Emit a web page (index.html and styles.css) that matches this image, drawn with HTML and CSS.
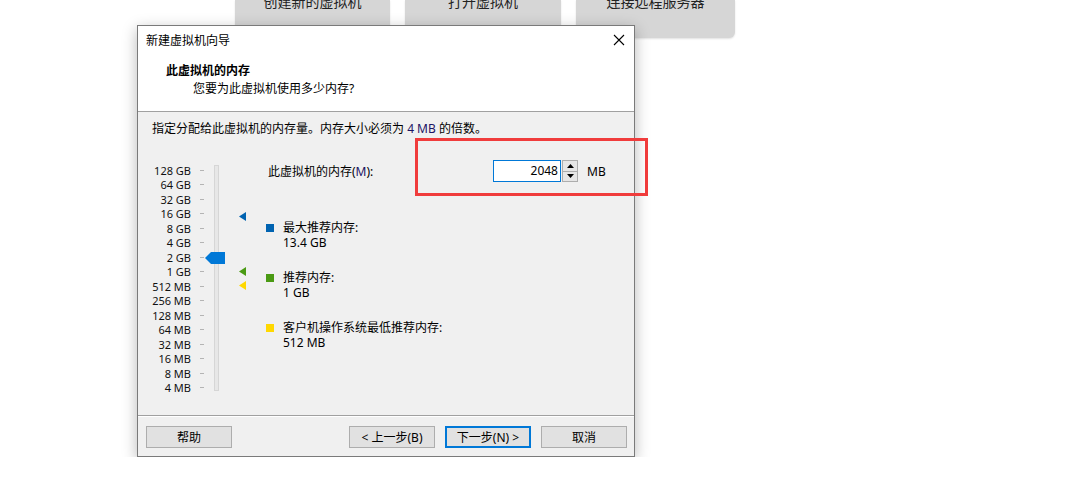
FILE: index.html
```html
<!DOCTYPE html>
<html lang="zh-CN">
<head>
<meta charset="UTF-8">
<title>新建虚拟机向导</title>
<link rel="stylesheet" href="styles.css">
</head>
<body>

<div class="toolbar">
    <div class="tool-btn">创建新的虚拟机</div>
    <div class="tool-btn">打开虚拟机</div>
    <div class="tool-btn">连接远程服务器</div>
</div>

<div class="dialog">
    <div class="titlebar">
        <span class="title">新建虚拟机向导</span>
        <svg class="close" width="12" height="12" viewBox="0 0 12 12">
            <path d="M1 1 L11 11 M11 1 L1 11" stroke="#000" stroke-width="1.1" fill="none"/>
        </svg>
    </div>
    <div class="header">
        <div class="heading">此虚拟机的内存</div>
        <div class="subheading">您要为此虚拟机使用多少内存?</div>
    </div>

    <div class="body">
        <div class="hint">指定分配给此虚拟机的内存量。内存大小必须为 <span class="accent">4 MB</span> 的倍数。</div>

        <div class="main">
            <div class="scale">
                <div class="labels">
                    <div class="mark"><span>128 GB</span><i></i></div>
                    <div class="mark"><span>64 GB</span><i></i></div>
                    <div class="mark"><span>32 GB</span><i></i></div>
                    <div class="mark"><span>16 GB</span><i></i></div>
                    <div class="mark"><span>8 GB</span><i></i></div>
                    <div class="mark"><span>4 GB</span><i></i></div>
                    <div class="mark"><span>2 GB</span><i></i></div>
                    <div class="mark"><span>1 GB</span><i></i></div>
                    <div class="mark"><span>512 MB</span><i></i></div>
                    <div class="mark"><span>256 MB</span><i></i></div>
                    <div class="mark"><span>128 MB</span><i></i></div>
                    <div class="mark"><span>64 MB</span><i></i></div>
                    <div class="mark"><span>32 MB</span><i></i></div>
                    <div class="mark"><span>16 MB</span><i></i></div>
                    <div class="mark"><span>8 MB</span><i></i></div>
                    <div class="mark"><span>4 MB</span><i></i></div>
                </div>
                <div class="track"></div>

                <svg class="thumb" width="20" height="12" viewBox="0 0 20 12">
                    <path d="M0 6 L6 0 H20 V12 H6 Z" fill="#0078d7"/>
                </svg>
                <svg class="pointer" style="top: 49px" width="7" height="9" viewBox="0 0 7 9">
                    <path d="M0 4.5 L7 0 V9 Z" fill="#0063b1"/>
                </svg>
                <svg class="pointer" style="top: 104px" width="7" height="9" viewBox="0 0 7 9">
                    <path d="M0 4.5 L7 0 V9 Z" fill="#4a9a13"/>
                </svg>
                <svg class="pointer" style="top: 118px" width="7" height="9" viewBox="0 0 7 9">
                    <path d="M0 4.5 L7 0 V9 Z" fill="#ffd800"/>
                </svg>
            </div>

            <div class="panel">
                <div class="memory-row">
                    <label class="memory-label">此虚拟机的内存(<span class="accent">M</span>):</label>
                    <div class="spin-input">2048</div>
                    <div class="spinner">
                        <div class="spin-btn">
                            <svg width="7" height="4" viewBox="0 0 7 4"><path d="M0 4 L3.5 0 L7 4 Z" fill="#000"/></svg>
                        </div>
                        <div class="spin-btn">
                            <svg width="7" height="4" viewBox="0 0 7 4"><path d="M0 0 L3.5 4 L7 0 Z" fill="#000"/></svg>
                        </div>
                    </div>
                    <span class="unit">MB</span>
                </div>

                <div class="legend">
                    <div class="legend-item">
                        <div class="legend-label"><span class="swatch swatch-blue"></span>最大推荐内存:</div>
                        <div class="legend-value">13.4 GB</div>
                    </div>
                    <div class="legend-item">
                        <div class="legend-label"><span class="swatch swatch-green"></span>推荐内存:</div>
                        <div class="legend-value">1 GB</div>
                    </div>
                    <div class="legend-item">
                        <div class="legend-label"><span class="swatch swatch-yellow"></span>客户机操作系统最低推荐内存:</div>
                        <div class="legend-value">512 MB</div>
                    </div>
                </div>
            </div>
        </div>
    </div>

    <div class="footer">
        <button class="btn">帮助</button>
        <div class="footer-right">
            <button class="btn">&lt; 上一步(B)</button>
            <button class="btn btn-default">下一步(N) &gt;</button>
            <button class="btn">取消</button>
        </div>
    </div>

    <div class="highlight"></div>
</div>

</body>
</html>
```

FILE: styles.css
```css
body {
    margin: 0;
    padding: 0;
    background: #fff;
    font-family: "Noto Sans", "Noto Sans CJK SC", sans-serif;
    font-size: 12px;
    color: #000;
    overflow: hidden;
}

/* background toolbar, mostly hidden behind the dialog */
.toolbar {
    display: flex;
    gap: 15px;
    margin-left: 235px;
    height: 38px;
}
.tool-btn {
    width: 156px;
    height: 38px;
    background: #d6d6d6;
    border-radius: 0 0 6px 6px;
    box-shadow: 0 1px 2px rgba(0, 0, 0, 0.12);
    text-align: center;
    font-size: 14px;
    line-height: 20px;
    color: #222;
    overflow: hidden;
}
.tool-btn:first-child {
    width: 155px;
}
.tool-btn:last-child {
    width: 159px;
}
.tool-btn::before {
    content: "";
    display: block;
    margin-top: -8px;
}

/* dialog */
.dialog {
    position: relative;
    z-index: 1;
    width: 496px;
    margin: -13px 0 0 137px;
    border: 1px solid #7a7a7a;
    background: #f0f0f0;
    box-shadow: 0 4px 14px rgba(0, 0, 0, 0.28);
}
.titlebar {
    display: flex;
    align-items: center;
    justify-content: space-between;
    height: 30px;
    padding: 0 9px 0 8px;
    background: #fff;
}
.title {
    line-height: 30px;
}
.close {
    margin-top: -2px;
}
.header {
    height: 56px;
    padding-top: 6px;
    box-sizing: border-box;
    background: #fff;
    border-bottom: 1px solid #a0a0a0;
}
.heading {
    font-weight: bold;
    line-height: 18px;
    padding-left: 28px;
}
.subheading {
    line-height: 18px;
    padding-left: 55px;
}

.body {
    height: 304px;
    box-sizing: border-box;
    padding: 8px 0 0 14px;
    border-bottom: 1px solid #a0a0a0;
}
.hint {
    line-height: 17px;
}
.accent {
    color: #1c1464;
}

.main {
    display: flex;
    margin-top: 23px;
}

/* memory scale */
.scale {
    position: relative;
    display: flex;
    padding-top: 3px;
    width: 67px;
}
.labels {
    display: flex;
    flex-direction: column;
}
.mark {
    display: flex;
    align-items: center;
    justify-content: flex-end;
    width: 52px;
    height: 14.5px;
    font-size: 11px;
    color: #111;
    white-space: nowrap;
}
.mark i {
    display: block;
    width: 4px;
    height: 1px;
    margin-left: 9px;
    background: #b4b4b4;
}
.track {
    width: 3px;
    height: 224px;
    margin: 2px 0 0 10px;
    background: #e7e7e7;
    border: 1px solid #d6d6d6;
}
.thumb {
    position: absolute;
    left: 53px;
    top: 92px;
}
.pointer {
    position: absolute;
    left: 87px;
    margin-top: 3px;
}

/* right panel */
.panel {
    margin-left: 47px;
}
.memory-row {
    display: flex;
    align-items: center;
    height: 22px;
}
.memory-label {
    width: 227px;
    padding-left: 2px;
    box-sizing: border-box;
}
.spin-input {
    width: 68px;
    height: 22px;
    box-sizing: border-box;
    border: 1px solid #0078d7;
    background: #fff;
    text-align: right;
    padding-right: 2px;
    line-height: 20px;
}
.spinner {
    display: flex;
    flex-direction: column;
    margin-left: 1px;
    width: 16px;
    height: 22px;
    border: 1px solid #adadad;
    box-sizing: border-box;
    background: #e6e6e6;
}
.spin-btn {
    flex: 1;
    display: flex;
    align-items: center;
    justify-content: center;
}
.spin-btn + .spin-btn {
    border-top: 1px solid #adadad;
}
.unit {
    margin-left: 9px;
}

.legend {
    margin-top: 38px;
}
.legend-item + .legend-item {
    margin-top: 20px;
}
.legend-label,
.legend-value {
    display: flex;
    align-items: center;
    line-height: 15px;
    padding-left: 17px;
}
.legend-label {
    padding-left: 0;
}
.swatch {
    display: inline-block;
    width: 8px;
    height: 8px;
    margin-right: 9px;
}
.swatch-blue { background: #0063b1; }
.swatch-green { background: #4a9a13; }
.swatch-yellow { background: #ffd800; }

/* footer */
.footer {
    display: flex;
    justify-content: space-between;
    padding: 10px 7px 8px 8px;
    box-shadow: inset 0 1px #fff;
}
.footer-right {
    display: flex;
    gap: 10px;
}
.btn {
    width: 86px;
    height: 22px;
    padding: 0;
    font-family: inherit;
    font-size: 12px;
    color: #000;
    background: #e1e1e1;
    border: 1px solid #adadad;
}
.btn-default {
    border: 2px solid #0078d7;
}

/* annotation frame */
.highlight {
    position: absolute;
    left: 277px;
    top: 112px;
    width: 227px;
    height: 52px;
    border: 3px solid #f03c3c;
}
```
